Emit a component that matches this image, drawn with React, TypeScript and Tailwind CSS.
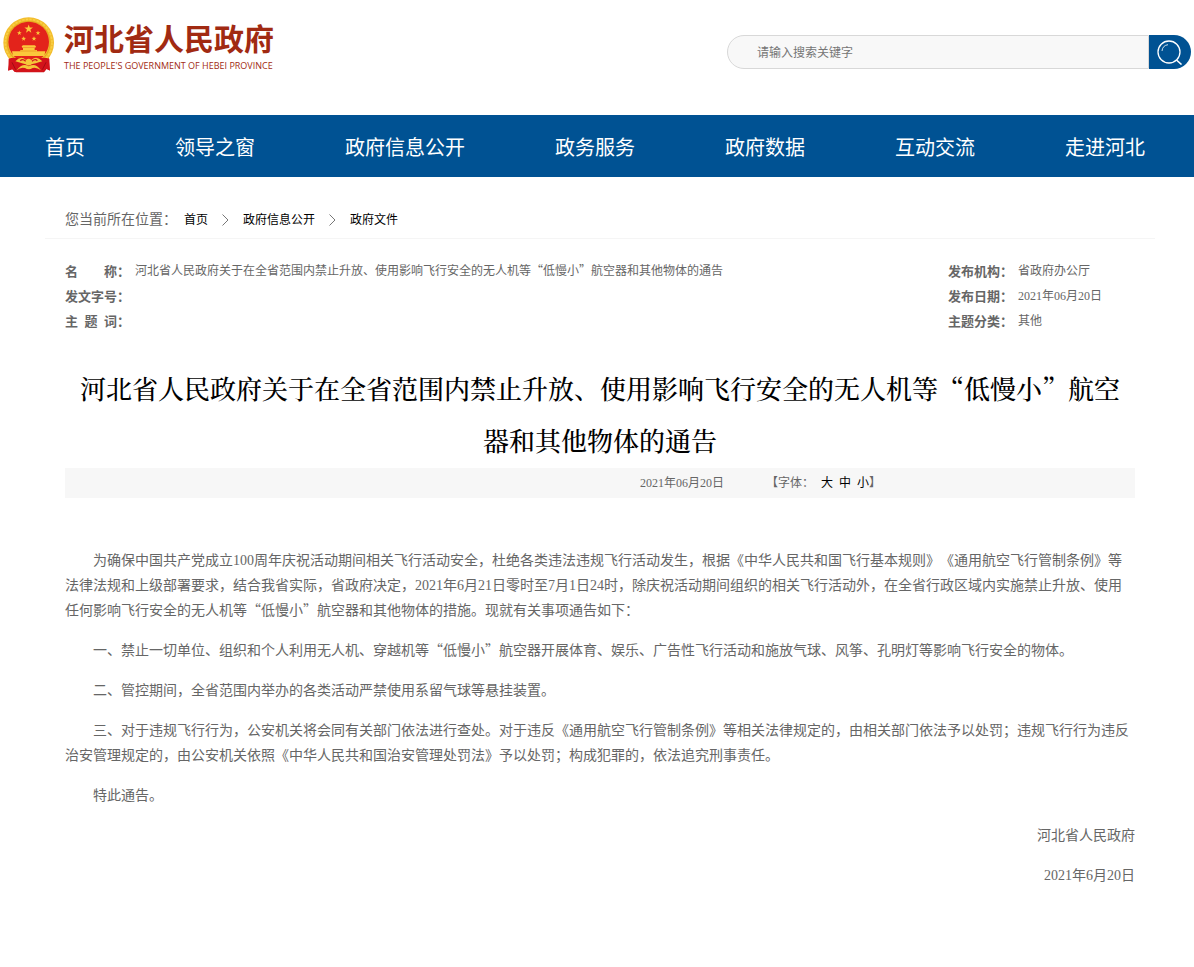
import React from 'react';

const NAV_ITEMS = ['首页', '领导之窗', '政府信息公开', '政务服务', '政府数据', '互动交流', '走进河北'];

const CRUMBS = ['首页', '政府信息公开', '政府文件'];

const FONT_SIZES = ['大', '中', '小'];

const STAR = '0,-10 2.4,-3.2 9.5,-3.1 3.8,1.2 5.9,8.1 0,4 -5.9,8.1 -3.8,1.2 -9.5,-3.1 -2.4,-3.2';

/** Latin digits come from the serif face, so the curly quotes need the full-width CJK one */
function Quoted({ children }: { children: React.ReactNode }) {
  return (
    <span className="font-['Noto_Sans_CJK_SC',sans-serif] leading-none">“{children}”</span>
  );
}

function Emblem() {
  return (
    <svg viewBox="0 0 180 186" className="h-[62px] w-[60px] shrink-0" aria-hidden="true">
      <path d="M32 124 L24 170 L38 166 L48 175 L132 175 L140 165 L150 170 L145 124 Z" fill="#c8101a" />
      <circle cx="86" cy="86" r="76" fill="#f3bd2c" />
      <circle cx="86" cy="86" r="70" fill="none" stroke="#f8cf45" strokeWidth="5" strokeDasharray="7 4" />
      <circle cx="86" cy="86" r="64" fill="none" stroke="#dc9a18" strokeWidth="2" />
      <circle cx="86" cy="84" r="61" fill="#e3231b" />
      <g fill="#fbc83b">
        <polygon points={STAR} transform="translate(86 45) scale(1.35)" />
        <polygon points={STAR} transform="translate(58 57) scale(.75)" />
        <polygon points={STAR} transform="translate(114 57) scale(.75)" />
        <polygon points={STAR} transform="translate(71 74) scale(.75)" />
        <polygon points={STAR} transform="translate(102 74) scale(.75)" />
        <path d="M65 97 L69 94 H104 L108 97 L106 101 H67 Z" />
        <path d="M69 102 H104 V108 H69 Z" />
        <path d="M61 108 H111 V112 H136 L133 126 H39 L36 112 H61 Z" />
      </g>
      <path d="M62 111 H110" stroke="#e58d1b" strokeWidth="2" />
      <path d="M26 134 Q54 125 86 148 Q118 125 148 134 L149 169 L139 164 L130 174 H44 L36 165 L25 169 Z" fill="#d3131a" />
      <path d="M46 142 Q62 123 78 138 Q86 131 94 138 Q110 123 127 142 Q104 149 95 151 Q86 158 77 151 Q66 148 46 142 Z" fill="#f5c63a" />
      <path d="M61 140 Q68 133 77 142 M112 140 Q105 133 96 142" fill="none" stroke="#d3131a" strokeWidth="4" />
      <path d="M50 169 Q66 148 80 154 Q86 159 93 154 Q108 148 123 169 Q108 158 98 162 Q86 170 75 162 Q62 158 50 169 Z" fill="#f5c63a" />
      <path d="M36 145 L47 167 M138 145 L127 167" stroke="#a30b14" strokeWidth="3" />
    </svg>
  );
}

function Header() {
  return (
    <header className="flex h-[115px] items-start justify-between pr-[3px]">
      <a href="#" className="mt-[14px] flex items-start text-[#a12a12]">
        <Emblem />
        <span className="ml-1 flex flex-col pt-[2px]">
          <span className="font-['Noto_Sans_CJK_SC',sans-serif] text-[30px] leading-[42px] font-bold whitespace-nowrap">
            河北省人民政府
          </span>
          <span className="font-['Open_Sans',sans-serif] text-[9px] leading-[16px] font-medium whitespace-nowrap">
            THE PEOPLE'S GOVERNMENT OF HEBEI PROVINCE
          </span>
        </span>
      </a>
      <form className="mt-[35px] flex h-[34px] w-[464px]" onSubmit={(e) => e.preventDefault()}>
        <input
          type="text"
          aria-label="请输入搜索关键字"
          placeholder="请输入搜索关键字"
          className="min-w-0 flex-1 rounded-l-full border border-[#d8d8d8] bg-[#f8f8f8] pt-[2px] pl-[29px] text-xs outline-none placeholder:text-[#757575]"
        />
        <button
          type="submit"
          aria-label="搜索"
          className="flex w-[42px] items-center justify-center rounded-r-full bg-[#005293] text-white"
        >
          <svg viewBox="0 0 26 26" className="h-[26px] w-[26px]" fill="none" stroke="currentColor">
            <circle cx="12" cy="13" r="11" strokeWidth="1.3" />
            <path d="M5 12 A7 7 0 0 1 11 5.7" strokeWidth="1" opacity=".8" />
            <path d="M19.5 21 L24.5 25.5" strokeWidth="1.6" />
          </svg>
        </button>
      </form>
    </header>
  );
}

function MetaRow({ label, children }: { label: string; children?: React.ReactNode }) {
  return (
    <div className="flex">
      <dt className="w-[70px] shrink-0 text-[13px] font-bold whitespace-pre">{label}</dt>
      <dd>{children}</dd>
    </div>
  );
}

export default function App() {
  return (
    <div className="min-h-screen bg-white font-['Liberation_Serif','Noto_Sans_CJK_SC',sans-serif] text-[#666] [text-spacing-trim:space-all]">
      <Header />

      <nav className="flex h-[62px] items-center overflow-hidden bg-[#005293] pt-[2px]">
        {NAV_ITEMS.map((item) => (
          <a
            key={item}
            href="#"
            className="px-[45px] font-['Noto_Sans_CJK_SC',sans-serif] text-xl whitespace-nowrap text-white"
          >
            {item}
          </a>
        ))}
      </nav>

      <main className="pr-[39px] pl-[45px]">
        <div className="flex h-[62px] items-center border-b border-[#f5f5f5] px-5 pt-6 text-sm">
          <span>您当前所在位置：</span>
          {CRUMBS.map((crumb, i) => (
            <React.Fragment key={crumb}>
              {i > 0 && (
                <svg viewBox="0 0 7 12" className="mx-[14px] h-3 w-[7px]" fill="none" stroke="#777">
                  <path d="M.5 .5 L6 6 L.5 11.5" />
                </svg>
              )}
              <a href="#" className={i === 0 ? 'ml-[7px] text-xs text-black' : 'text-xs text-black'}>
                {crumb}
              </a>
            </React.Fragment>
          ))}
        </div>

        <div className="px-5">
          <div className="mt-5 flex justify-between text-xs leading-[25px]">
            <dl>
              <MetaRow label={'名　　称：'}>
                河北省人民政府关于在全省范围内禁止升放、使用影响飞行安全的无人机等<Quoted>低慢小</Quoted>航空器和其他物体的通告
              </MetaRow>
              <MetaRow label="发文字号：" />
              <MetaRow label={'主  题  词：'} />
            </dl>
            <dl className="w-[187px] shrink-0">
              <MetaRow label="发布机构：">省政府办公厅</MetaRow>
              <MetaRow label="发布日期：">2021年06月20日</MetaRow>
              <MetaRow label="主题分类：">其他</MetaRow>
            </dl>
          </div>

          <h1 className="mt-7 mb-[2px] px-2 text-center font-['Noto_Serif_CJK_SC','Noto_Sans_CJK_SC',serif] text-[26px] leading-[52px] font-medium text-black">
            河北省人民政府关于在全省范围内禁止升放、使用影响飞行安全的无人机等“低慢小”航空器和其他物体的通告
          </h1>

          <div className="grid grid-cols-2 bg-[#f7f7f7] text-xs leading-[30px]">
            <div className="col-start-2 flex pl-10">
              <span>2021年06月20日</span>
              <div className="ml-[42px] flex">
                <span>【字体：</span>
                <span className="ml-[7px] flex gap-[6px] text-black">
                  {FONT_SIZES.map((size) => (
                    <button key={size} type="button">
                      {size}
                    </button>
                  ))}
                </span>
                <span>】</span>
              </div>
            </div>
          </div>

          <article className="mt-[50px] flex flex-col gap-[15px] text-sm leading-[25px]">
            <p className="indent-7">
              为确保中国共产党成立100周年庆祝活动期间相关飞行活动安全，杜绝各类违法违规飞行活动发生，根据《中华人民共和国飞行基本规则》《通用航空飞行管制条例》等法律法规和上级部署要求，结合我省实际，省政府决定，2021年6月21日零时至7月1日24时，除庆祝活动期间组织的相关飞行活动外，在全省行政区域内实施禁止升放、使用任何影响飞行安全的无人机等<Quoted>低慢小</Quoted>航空器和其他物体的措施。现就有关事项通告如下：
            </p>
            <p className="indent-7">
              一、禁止一切单位、组织和个人利用无人机、穿越机等<Quoted>低慢小</Quoted>航空器开展体育、娱乐、广告性飞行活动和施放气球、风筝、孔明灯等影响飞行安全的物体。
            </p>
            <p className="indent-7">二、管控期间，全省范围内举办的各类活动严禁使用系留气球等悬挂装置。</p>
            <p className="indent-7">
              三、对于违规飞行行为，公安机关将会同有关部门依法进行查处。对于违反《通用航空飞行管制条例》等相关法律规定的，由相关部门依法予以处罚；违规飞行行为违反治安管理规定的，由公安机关依照《中华人民共和国治安管理处罚法》予以处罚；构成犯罪的，依法追究刑事责任。
            </p>
            <p className="indent-7">特此通告。</p>
            <p className="text-right">河北省人民政府</p>
            <p className="text-right">2021年6月20日</p>
          </article>
        </div>
      </main>
    </div>
  );
}
